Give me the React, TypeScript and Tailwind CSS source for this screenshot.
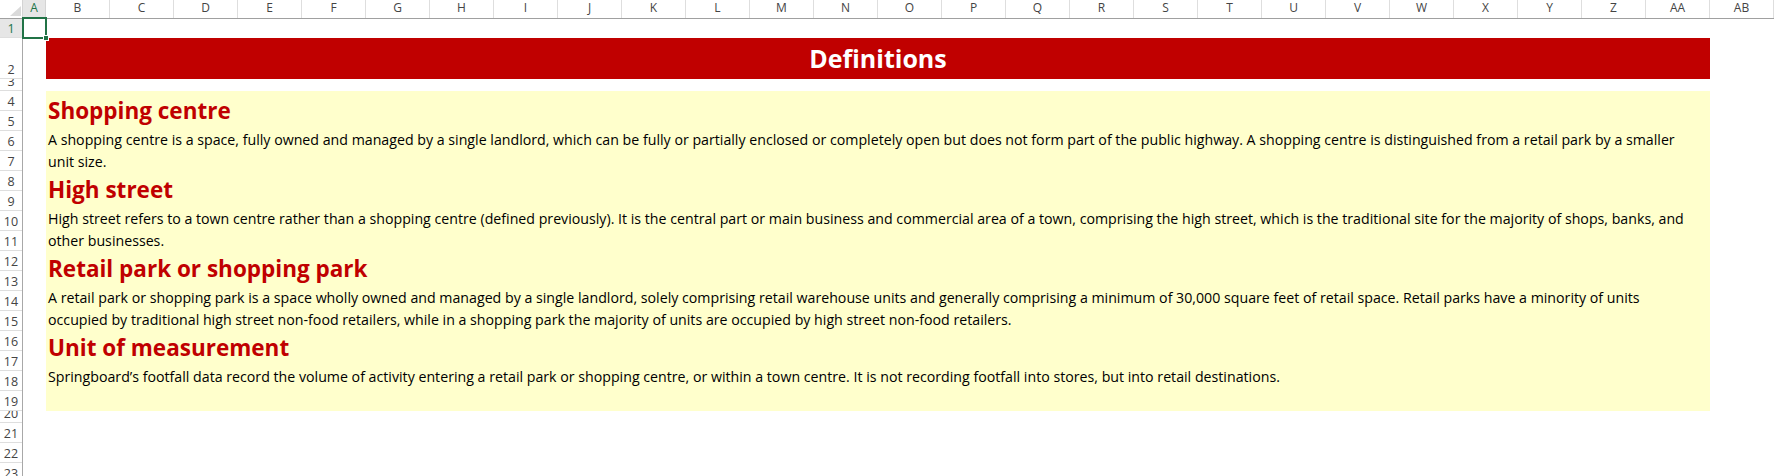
import React from 'react';

const columns = [
  'B', 'C', 'D', 'E', 'F', 'G', 'H', 'I', 'J', 'K', 'L', 'M', 'N',
  'O', 'P', 'Q', 'R', 'S', 'T', 'U', 'V', 'W', 'X', 'Y', 'Z', 'AA', 'AB',
];

// row number + height in px
const rows: { n: number; h: string }[] = [
  { n: 1, h: 'h-[19px]' },
  { n: 2, h: 'h-[41px]' },
  { n: 3, h: 'h-[12px]' },
  ...Array.from({ length: 16 }, (_, i) => ({ n: i + 4, h: 'h-[20px]' })),
  { n: 20, h: 'h-[12px]' },
  { n: 21, h: 'h-[20px]' },
  { n: 22, h: 'h-[20px]' },
  { n: 23, h: 'h-[20px]' },
];

const definitions = [
  {
    title: 'Shopping centre',
    body: 'A shopping centre is a space, fully owned and managed by a single landlord, which can be fully or partially enclosed or completely open but does not form part of the public highway. A shopping centre is distinguished from a retail park by a smaller unit size.',
  },
  {
    title: 'High street',
    body: 'High street refers to a town centre rather than a shopping centre (defined previously). It is the central part or main business and commercial area of a town, comprising the high street, which is the traditional site for the majority of shops, banks, and other businesses.',
  },
  {
    title: 'Retail park or shopping park',
    body: 'A retail park or shopping park is a space wholly owned and managed by a single landlord, solely comprising retail warehouse units and generally comprising a minimum of 30,000 square feet of retail space. Retail parks have a minority of units occupied by traditional high street non-food retailers, while in a shopping park the majority of units are occupied by high street non-food retailers.',
  },
  {
    title: 'Unit of measurement',
    body: 'Springboard\u2019s footfall data record the volume of activity entering a retail park or shopping centre, or within a town centre. It is not recording footfall into stores, but into retail destinations.',
  },
];

export default function App() {
  return (
    <div className="relative w-[1774px] h-[476px] overflow-hidden bg-white font-['Open_Sans',sans-serif] text-black">
      {/* Column headers */}
      <div className="flex h-[19px] border-b border-[#a0a0a0] text-[12px] leading-[16px] text-[#444]">
        <div className="relative w-[23px] shrink-0 border-r border-[#d4d4d4]">
          <svg className="absolute left-[10px] top-[6px]" width="11" height="10" viewBox="0 0 11 10">
            <polygon points="11,0 11,10 0,10" fill="#dadada" />
          </svg>
        </div>
        <div className="w-[23px] shrink-0 border-r border-[#d4d4d4] bg-[#e6e6e6] text-center text-[#217346]">A</div>
        {columns.map((c) => (
          <div key={c} className="w-[64px] shrink-0 border-r border-[#dedede] text-center">
            {c}
          </div>
        ))}
      </div>

      <div className="flex">
        {/* Row numbers */}
        <div className="w-[23px] shrink-0 border-r border-[#a8a8a8] text-[12.5px] leading-[17px] text-[#444]">
          {rows.map((r) => (
            <div
              key={r.n}
              className={`${r.h} flex items-end justify-center overflow-hidden border-b border-[#dedede] ${
                r.n === 1 ? 'bg-[#e6e6e6] text-[#217346]' : ''
              }`}
            >
              <span>{r.n}</span>
            </div>
          ))}
        </div>

        {/* Sheet body */}
        <div className="flex flex-col">
          <div className="h-[19px]" />
          <div className="ml-[23px] h-[41px] w-[1664px] bg-[#c00000] text-center text-[25px] font-bold leading-[41px] text-white">
            Definitions
          </div>
          <div className="h-[12px]" />
          <div className="ml-[23px] h-[320px] w-[1664px] bg-[#ffffcc] pl-[2px] pr-[14px] pt-[2px]">
            {definitions.map((d) => (
              <div key={d.title}>
                <h2 className="text-[22.5px] font-bold leading-[36px] text-[#c00000]">{d.title}</h2>
                <p className="text-[14.2px] leading-[21.5px]">{d.body}</p>
              </div>
            ))}
          </div>
        </div>
      </div>

      {/* Active cell A1 */}
      <div className="absolute left-[22px] top-[17px] h-[22px] w-[25px] border-2 border-[#217346]" />
      <div className="absolute left-[43px] top-[35px] h-[6px] w-[6px] border border-white bg-[#217346]" />
    </div>
  );
}
